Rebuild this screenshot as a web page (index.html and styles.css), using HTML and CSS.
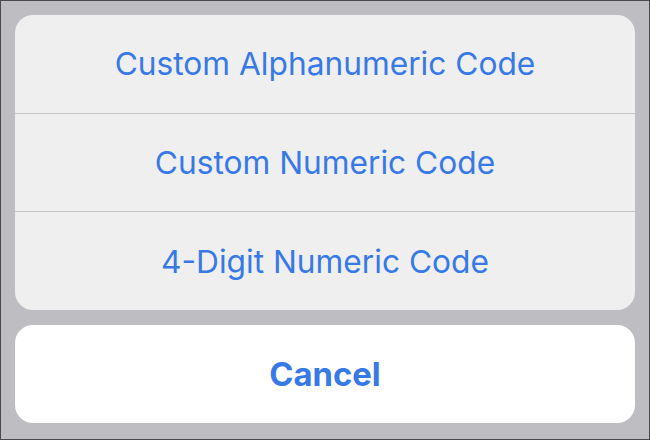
FILE: index.html
```html
<!DOCTYPE html>
<html lang="en">
<head>
  <meta charset="UTF-8">
  <title>Passcode Options</title>
  <link rel="stylesheet" href="styles.css">
</head>
<body>
  <div class="sheet">
    <div class="action-group">
      <a href="#" class="action">Custom Alphanumeric Code</a>
      <a href="#" class="action">Custom Numeric Code</a>
      <a href="#" class="action">4-Digit Numeric Code</a>
    </div>
    <a href="#" class="cancel">Cancel</a>
  </div>
</body>
</html>
```

FILE: styles.css
```css
* {
  box-sizing: border-box;
}

html, body {
  margin: 0;
  padding: 0;
}

body {
  font-family: Inter, "Noto Sans", sans-serif;
  background: #bebdc2;
  width: 650px;
  height: 440px;
  border: 1px solid #4a4a4a;
}

.sheet {
  display: flex;
  flex-direction: column;
  gap: 15px;
  padding: 14px 14px 16px;
  height: 100%;
}

.action-group {
  display: flex;
  flex-direction: column;
  background: #efeff0;
  border-radius: 18px;
  overflow: hidden;
  height: 295px;
}

.action {
  flex: 1;
  display: flex;
  align-items: center;
  justify-content: center;
  color: #3779e6;
  font-size: 31.7px;
  text-decoration: none;
}

.action + .action {
  border-top: 1px solid #c4c4c7;
}

.cancel {
  display: flex;
  align-items: center;
  justify-content: center;
  height: 98px;
  background: #ffffff;
  border-radius: 18px;
  color: #3779e6;
  font-size: 32.8px;
  font-weight: 700;
  text-decoration: none;
}
```
